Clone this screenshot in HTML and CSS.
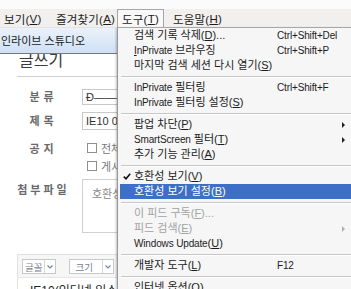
FILE: index.html
```html
<!DOCTYPE html>
<html lang="ko">
<head>
  <meta charset="UTF-8">
  <title>도구 메뉴</title>
  <link rel="stylesheet" href="styles.css">
</head>
<body>

  <div class="topstrip"></div>

  <div class="menubar">
    <span class="mb-item view">보기(<u>V</u>)</span>
    <span class="mb-item fav">즐겨찾기(<u>A</u>)</span>
    <span class="mb-item open">도구(<u>T</u>)</span>
    <span class="mb-item help">도움말(<u>H</u>)</span>
  </div>

  <div class="tabbar">
    <div class="tab">인라이브 스튜디오</div>
  </div>

  <div class="page">
    <h2 class="page-title">글쓰기</h2>
    <div class="form">
      <div class="lbl">분류</div>
      <div class="field"><div class="select">Ð——————</div></div>

      <div class="lbl">제목</div>
      <div class="field"><div class="input">IE10 0</div></div>

      <div class="lbl">공지</div>
      <div class="field checks">
        <label class="chk"><span class="box"></span>전체</label>
        <label class="chk"><span class="box"></span>게시</label>
      </div>

      <div class="lbl">첨부파일</div>
      <div class="field"><div class="attach">호환성</div></div>
    </div>

    <div class="editor">
      <div class="toolbar">
        <span class="tb-btn font">글꼴<span class="dd"><svg width="6" height="4" viewBox="0 0 6 4"><path d="M0.5 0.5 L3 3 L5.5 0.5" fill="none" stroke="#6f86a8" stroke-width="1.2"/></svg></span></span>
        <span class="tb-btn size">크기<span class="dd"><svg width="6" height="4" viewBox="0 0 6 4"><path d="M0.5 0.5 L3 3 L5.5 0.5" fill="none" stroke="#6f86a8" stroke-width="1.2"/></svg></span></span>
      </div>
      <div class="editor-text">IE10(인터넷 익스플로러)</div>
    </div>
  </div>

  <div class="dropdown">
    <div class="item"><span></span><span>검색 기록 삭제(<u>D</u>)...</span><span class="key">Ctrl+Shift+Del</span><span></span></div>
    <div class="item"><span></span><span><span class="en"><u>I</u>nPrivate</span> 브라우징</span><span class="key">Ctrl+Shift+P</span><span></span></div>
    <div class="item"><span></span><span>마지막 검색 세션 다시 열기(<u>S</u>)</span><span></span><span></span></div>
    <div class="sep"></div>
    <div class="item"><span></span><span><span class="en">InPrivate</span> 필터링</span><span class="key">Ctrl+Shift+F</span><span></span></div>
    <div class="item"><span></span><span><span class="en">InPrivate</span> 필터링 설정(<u>S</u>)</span><span></span><span></span></div>
    <div class="sep"></div>
    <div class="item"><span></span><span>팝업 차단(<u>P</u>)</span><span></span><span class="arrow"></span></div>
    <div class="item"><span></span><span><span class="en">SmartScreen</span> 필터(<u>T</u>)</span><span></span><span class="arrow"></span></div>
    <div class="item"><span></span><span>추가 기능 관리(<u>A</u>)</span><span></span><span></span></div>
    <div class="sep"></div>
    <div class="item"><span class="check"><svg width="8" height="7" viewBox="0 0 8 7"><path d="M0.8 3.6 L3 5.8 L7.2 0.8" fill="none" stroke="#111" stroke-width="1.6"/></svg></span><span>호환성 보기(<u>V</u>)</span><span></span><span></span></div>
    <div class="item active"><span></span><span>호환성 보기 설정(<u>B</u>)</span><span></span><span></span></div>
    <div class="sep"></div>
    <div class="item disabled"><span></span><span>이 피드 구독(<u>F</u>)...</span><span></span><span></span></div>
    <div class="item disabled"><span></span><span>피드 검색(<u>E</u>)</span><span></span><span class="arrow"></span></div>
    <div class="item"><span></span><span><span class="en">Windows Update</span>(<u>U</u>)</span><span></span><span></span></div>
    <div class="sep"></div>
    <div class="item"><span></span><span>개발자 도구(<u>L</u>)</span><span class="key">F12</span><span></span></div>
    <div class="sep"></div>
    <div class="item"><span></span><span>인터넷 옵션(<u>O</u>)</span><span></span><span></span></div>
  </div>

</body>
</html>
```

FILE: styles.css
```css
body {
  margin: 0;
  width: 351px;
  height: 289px;
  overflow: hidden;
  position: relative;
  background: #fff;
  font-family: "Liberation Sans", "Noto Sans CJK KR", sans-serif;
  font-size: 11px;
  color: #1c1c1c;
}
u {
  text-decoration: underline;
  text-underline-offset: 1px;
}

.topstrip {
  height: 9px;
  background: #fbfbfb;
}

/* menu bar */
.menubar {
  height: 18px;
  display: flex;
  background: #f1f0ee;
  border-bottom: 1px solid #e4e2de;
  font-size: 11.5px;
  letter-spacing: 0.2px;
}
.mb-item {
  display: flex;
  align-items: center;
  box-sizing: border-box;
  border: 1px solid transparent;
  border-bottom: none;
}
.mb-item.view { width: 52px; padding-left: 3px; }
.mb-item.fav { width: 65px; padding-left: 3px; }
.mb-item.open {
  width: 47px;
  justify-content: center;
  background: #f9f9f9;
  border-color: #a6a6a6;
}
.mb-item.help { padding-left: 8px; }

/* tab row */
.tabbar {
  height: 25px;
  border-bottom: 1px solid #7a7a7a;
  background: #f4f4f4;
}
.tab {
  width: 118px;
  height: 25px;
  line-height: 27px;
  padding-left: 1px;
  box-sizing: border-box;
  background: linear-gradient(#eaf2fb, #cfe0f4);
  font-size: 11px;
  color: #1a1a1a;
}

/* page under the menu */
.page {
  padding-left: 17px;
  overflow: hidden;
  height: 240px;
}
.page-title {
  margin: -6px 0 0 0;
  padding-left: 2px;
  width: 320px;
  height: 28px;
  line-height: 26px;
  font-size: 16px;
  font-weight: normal;
  color: #3a3a3a;
  border-bottom: 1px solid #cfcfcf;
}
.form {
  display: grid;
  grid-template-columns: 65px 260px;
  margin-top: 12px;
}
.lbl {
  font-weight: bold;
  color: #6a6a6a;
  letter-spacing: 4px;
  text-align: center;
  padding-right: 12px;
  font-size: 11px;
}
.form .lbl:nth-of-type(1) { line-height: 16px; height: 23px; }
.form .lbl:nth-of-type(3) { line-height: 18px; height: 27px; }
.form .lbl:nth-of-type(5) { line-height: 14px; height: 37px; padding-top: 3px; }
.form .lbl:nth-of-type(7) { line-height: 14px; padding-top: 4px; letter-spacing: 3px; }

.select, .input {
  border: 1px solid #c8c8c8;
  height: 14px;
  line-height: 14px;
  padding-left: 3px;
  color: #333;
  font-size: 11px;
}
.input {
  height: 16px;
  line-height: 16px;
}
.checks {
  display: flex;
  flex-direction: column;
  gap: 6px;
  padding-left: 5px;
  padding-top: 3px;
}
.chk {
  display: flex;
  align-items: center;
  gap: 4px;
  color: #777;
  height: 12px;
}
.box {
  width: 8px;
  height: 8px;
  border: 1px solid #8e8e8e;
  background: #fff;
}
.attach {
  border: 1px solid #d0d0d0;
  height: 54px;
  color: #8a8a8a;
  padding: 5px 0 0 9px;
  box-sizing: border-box;
}

.editor {
  margin-top: 21px;
  width: 320px;
  border-top: 1px solid #e2e2e2;
  border-left: 1px solid #e2e2e2;
}
.toolbar {
  display: flex;
  gap: 13px;
  padding: 4px 4px 3px;
  background: #f6f6f6;
  border-bottom: 1px solid #e6e6e6;
}
.tb-btn {
  display: flex;
  align-items: center;
  white-space: nowrap;
  border: 1px solid #c8c8c8;
  background: #fff;
  height: 13px;
  color: #7a8290;
  font-size: 9.5px;
  padding-left: 2px;
}
.tb-btn.size { padding-left: 5px; }
.tb-btn .dd {
  display: flex;
  align-items: center;
  height: 100%;
  margin-left: 2px;
  border-left: 1px solid #d6d6d6;
  padding: 0 2px;
}
.tb-btn.size .dd { margin-left: 9px; }
.editor-text {
  padding: 3px 0 0 12px;
  color: #222;
  font-size: 12px;
}

/* drop-down menu */
.dropdown {
  position: absolute;
  left: 117px;
  top: 27px;
  width: 238px;
  background: #f6f6f6;
  border: 1px solid #979797;
  border-top-color: #a6a6a6;
  box-shadow: -1px 1px 2px rgba(0, 0, 0, 0.25);
}
.item {
  display: grid;
  grid-template-columns: 14px 143px 1fr 12px;
  height: 15px;
  line-height: 15px;
  margin: 0 2px;
  white-space: nowrap;
}
.item > span:nth-child(1) {
  display: flex;
  align-items: center;
  justify-content: center;
}
.item .en,
.item .key {
  font-size: 10px;
  letter-spacing: -0.15px;
}
.item.active {
  background: #3d6fc6;
  color: #fff;
}
.item.disabled {
  color: #a3a3a3;
}
.arrow {
  display: flex;
  align-items: center;
}
.arrow::before {
  content: "";
  border-left: 3px solid #222;
  border-top: 3px solid transparent;
  border-bottom: 3px solid transparent;
}
.item.disabled .arrow::before {
  border-left-color: #b0b0b0;
}
.sep {
  height: 1px;
  margin: 3px 1px 2px 3px;
  background: #c6c6c6;
  border-bottom: 1px solid #fff;
}
```
